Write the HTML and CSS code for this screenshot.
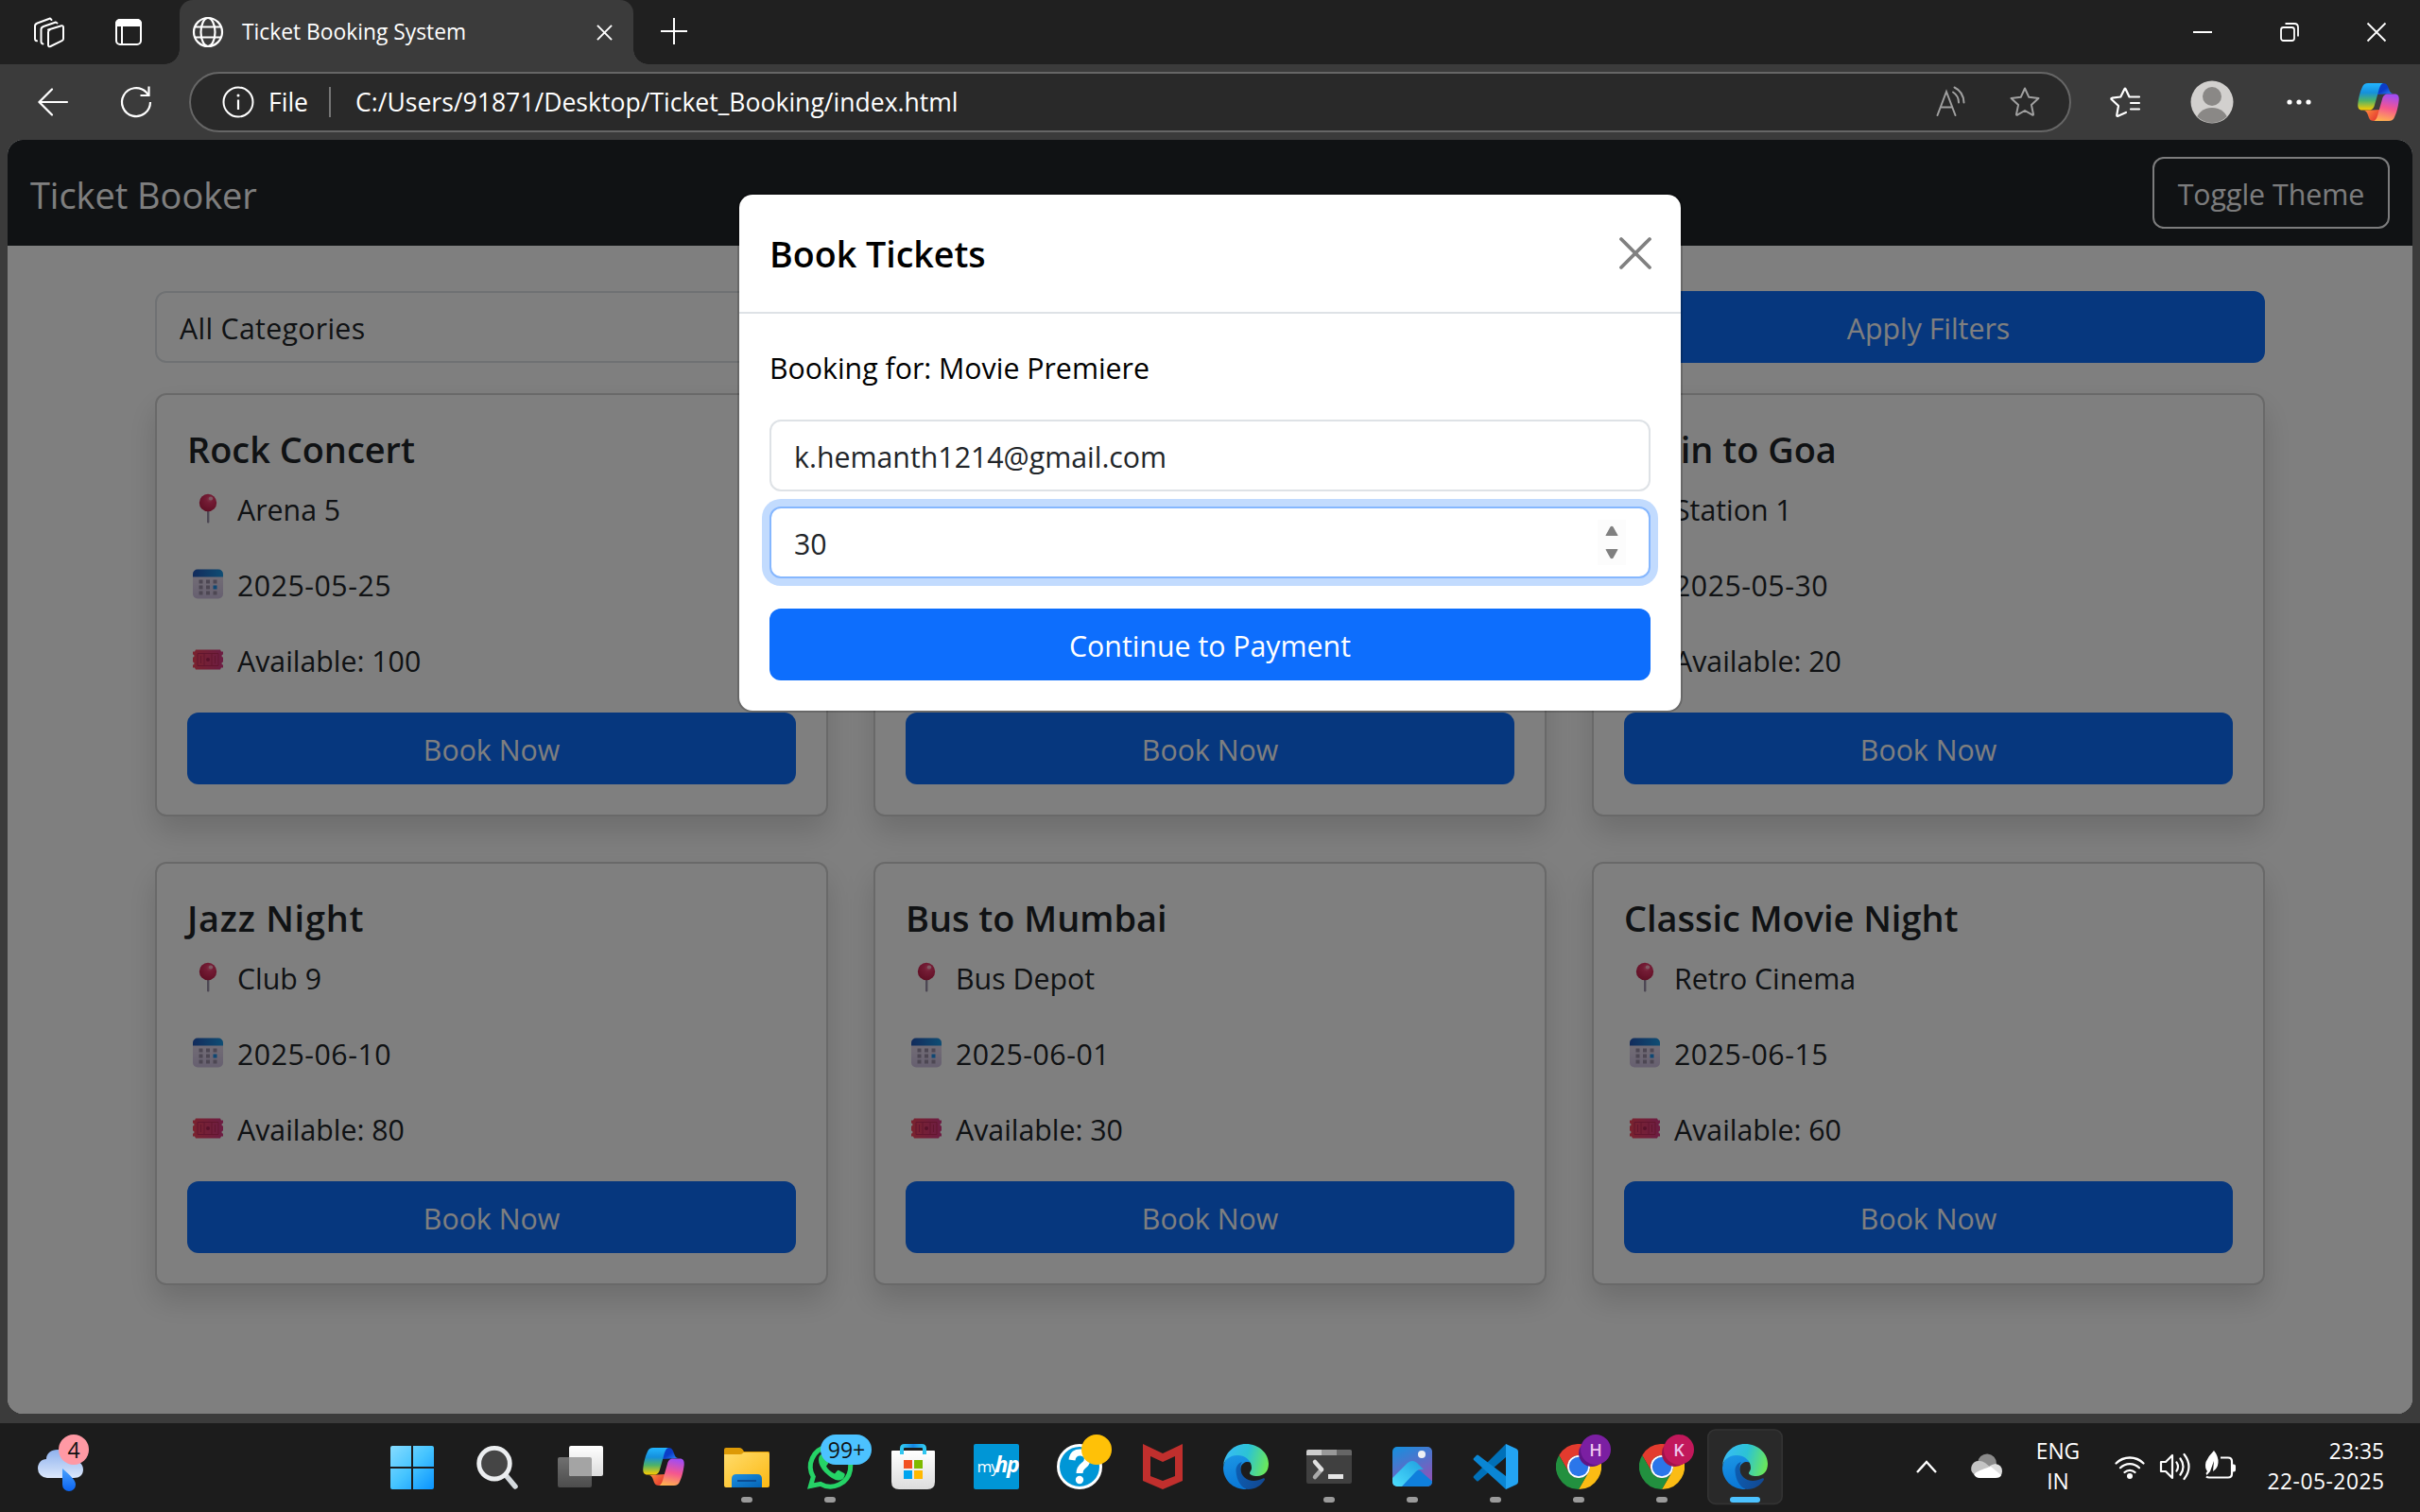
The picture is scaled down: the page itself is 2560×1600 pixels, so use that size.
FILE: index.html
```html
<!DOCTYPE html>
<html lang="en">
<head>
<meta charset="utf-8">
<title>Ticket Booking System</title>
<link rel="stylesheet" href="styles.css">
</head>
<body>
<svg class="defs" aria-hidden="true">
  <defs>
    <linearGradient id="cpA" x1="0" y1="0" x2="0" y2="1"><stop offset="0" stop-color="#22b5ff"/><stop offset=".35" stop-color="#1590dc"/><stop offset=".65" stop-color="#4eb268"/><stop offset="1" stop-color="#ffcc00"/></linearGradient>
    <linearGradient id="cpB" x1="0" y1="0" x2="1" y2="1"><stop offset="0" stop-color="#0a3fc6"/><stop offset=".5" stop-color="#0b3cc8"/><stop offset="1" stop-color="#2f90ff"/></linearGradient>
    <linearGradient id="cpC" x1=".5" y1="0" x2=".3" y2="1"><stop offset="0" stop-color="#a24cf2"/><stop offset=".5" stop-color="#f5568f"/><stop offset="1" stop-color="#ffb24e"/></linearGradient>
    <linearGradient id="cpD" x1="0" y1="0" x2="1" y2=".6"><stop offset="0" stop-color="#ff9340"/><stop offset="1" stop-color="#e5382f"/></linearGradient>
    <linearGradient id="edA" x1="0" y1=".4" x2="1" y2=".6"><stop offset="0" stop-color="#37bbf6"/><stop offset=".5" stop-color="#2cc3d4"/><stop offset="1" stop-color="#6ce957"/></linearGradient>
    <linearGradient id="edB" x1="0" y1="0" x2=".2" y2="1"><stop offset="0" stop-color="#1c97e6"/><stop offset="1" stop-color="#0a78d6"/></linearGradient>
    <linearGradient id="edC" x1="0" y1="0" x2="1" y2=".3"><stop offset="0" stop-color="#0c5fb4"/><stop offset="1" stop-color="#124a94"/></linearGradient>
    <linearGradient id="win" gradientUnits="userSpaceOnUse" x1="15" y1="18" x2="61" y2="64"><stop offset="0" stop-color="#86dcff"/><stop offset=".5" stop-color="#45c4ff"/><stop offset="1" stop-color="#0a94ff"/></linearGradient>
    <linearGradient id="fold" x1="0" y1="0" x2="1" y2="1"><stop offset="0" stop-color="#ffdc6b"/><stop offset="1" stop-color="#fcb914"/></linearGradient>
    <linearGradient id="foldB" x1="0" y1="0" x2="1" y2="1"><stop offset="0" stop-color="#1b8fe0"/><stop offset="1" stop-color="#0563b4"/></linearGradient>
    <linearGradient id="white" x1="0" y1="0" x2="0" y2="1"><stop offset="0" stop-color="#fff"/><stop offset="1" stop-color="#dcdcdc"/></linearGradient>
    <linearGradient id="grey" x1="0" y1="0" x2="0" y2="1"><stop offset="0" stop-color="#707070"/><stop offset="1" stop-color="#4c4c4c"/></linearGradient>
    <linearGradient id="handle" x1="0" y1="0" x2="1" y2="0"><stop offset="0" stop-color="#30c8f0"/><stop offset=".5" stop-color="#1587e6"/><stop offset="1" stop-color="#30c8f0"/></linearGradient>
    <linearGradient id="photo" x1="0" y1="0" x2=".5" y2="1"><stop offset="0" stop-color="#1291e0"/><stop offset="1" stop-color="#8a56b8"/></linearGradient>
    <linearGradient id="mount" x1="0" y1="1" x2="1" y2="0"><stop offset="0" stop-color="#4fe3ff"/><stop offset="1" stop-color="#1f9fe0"/></linearGradient>
    <linearGradient id="cloud" x1="0" y1="0" x2="0" y2="1"><stop offset="0" stop-color="#8fb2ee"/><stop offset="1" stop-color="#dbe7fb"/></linearGradient>
    <linearGradient id="drop" x1="0" y1="0" x2="0" y2="1"><stop offset="0" stop-color="#4aa3ff"/><stop offset="1" stop-color="#0a63f0"/></linearGradient>
    <linearGradient id="calTop" x1="0" y1="0" x2="1" y2="0"><stop offset="0" stop-color="#2457b8"/><stop offset="1" stop-color="#1e9be8"/></linearGradient>
    <linearGradient id="calBody" x1="0" y1="0" x2="0" y2="1"><stop offset="0" stop-color="#ece2f0"/><stop offset="1" stop-color="#cdbfe0"/></linearGradient>
    <linearGradient id="tick" x1="0" y1="0" x2="1" y2="0"><stop offset="0" stop-color="#f5455c"/><stop offset="1" stop-color="#d93a86"/></linearGradient>
    <radialGradient id="pinHead" cx=".6" cy=".3" r=".7"><stop offset="0" stop-color="#ff6a90"/><stop offset=".3" stop-color="#e8386a"/><stop offset="1" stop-color="#c21f4a"/></radialGradient>
  </defs>
  <symbol id="copilot" viewBox="0 0 44 40">
    <path fill="url(#cpB)" d="M20 12C22 4 24 0 27 0c4 0 5 3 6 6s2 5 5 5z"/>
    <path fill="url(#cpD)" d="M24 28C22 36 20 40 17 40c-4 0-5-3-6-6s-2-5-5-5z"/>
    <path fill="url(#cpA)" d="M11 0H27C24 1 23 5 22 9l-4 14c-1 4-3 5.500-6 5.500H5C1 28.500 0 26 .3 22 1 15 3 8 5 4 6 1.500 8 0 11 0z"/>
    <path fill="url(#cpC)" d="M33 40H17c3-1 4-5 5-9l4-14c1-4 3-5.500 6-5.500h7c4 0 5 2.500 4.700 6.500-.7 7-2.700 14-4.700 18-1 2.500-3 4-6 4z"/>
  </symbol>
  <symbol id="edge" viewBox="0 0 48 48">
    <path fill="url(#edB)" d="M0 25C1 16 8 11 15 11c8 0 13 4 14.500 9C26 18 20 19 18.500 25 17 32 22 40 31 40L24 48C10 48 0 38 0 25z"/>
    <path fill="url(#edC)" d="M13.500 29c-.5-5 2.500-9 6.500-10-3 4-2 12 2 16 5 5 13 5 20 1.600 1.500-.8 2.500.2 1.700 1.600C40 44 34 48 26 48c-7-1-12-10-12.500-19z"/>
    <path fill="url(#edA)" d="M.2 23C1 10 11 0 24 0c14 0 24 10 24 21 0 8-5 13-12 13-5 0-8-1.500-8-3s2-2.500 2-6c0-7-6-13-15-13C6 12 1 18 .2 23z"/>
  </symbol>
  <symbol id="chrome" viewBox="0 0 48 48">
    <path fill="#e33b2e" d="M3.200 12A24 24 0 0 1 44.800 12H24A12 12 0 0 0 13.600 30z"/>
    <path fill="#fbbc14" d="M44.800 12A24 24 0 0 1 24 48L34.400 30A12 12 0 0 0 24 12z"/>
    <path fill="#22903f" d="M24 48A24 24 0 0 1 3.200 12L13.600 30A12 12 0 0 0 34.400 30z"/>
    <circle cx="24" cy="24" r="12" fill="#fff"/><circle cx="24" cy="24" r="10.200" fill="#2b76ea"/>
  </symbol>
  <symbol id="pin" viewBox="0 0 32 32">
    <rect x="15" y="16" width="2.400" height="15.500" rx="1" fill="#9a90a8"/><circle cx="16" cy="10" r="9.200" fill="url(#pinHead)"/><ellipse cx="19" cy="5.500" rx="2.200" ry="2" fill="#ffb0c4"/>
  </symbol>
  <symbol id="calendar" viewBox="0 0 32 32">
    <rect x="0" y=".5" width="32" height="31" rx="5" fill="url(#calBody)"/><path fill="url(#calTop)" d="M0 8.500V5.500a5 5 0 0 1 5-5h22a5 5 0 0 1 5 5v3z"/>
    <path fill="#9a8fa6" d="M6.500 11.500h4v4h-4zM14 11.500h4v4h-4zM21.500 11.500h4v4h-4zM6.500 17.500h4v4h-4zM14 17.500h4v4h-4zM6.500 23.500h4v4h-4zM14 23.500h4v4h-4zM21.500 23.500h4v4h-4z"/><path fill="#1e8fe6" d="M21.500 17.500h4v4h-4z"/>
  </symbol>
  <symbol id="ticket" viewBox="0 0 32 32">
    <path fill="url(#tick)" d="M3 5.500h26l1 2h2v3a1.500 1.500 0 0 0 0 3v5a1.500 1.500 0 0 0 0 3v3h-2l-1 2H3l-1-2H0v-3a1.500 1.500 0 0 0 0-3v-5a1.500 1.500 0 0 0 0-3v-3h2z"/>
    <path fill="none" stroke="#c42c5c" stroke-width="1" d="M5 9.500h22v13H5zM12 9.500v13M20 9.500v13M8.500 12v8M23.500 12v8"/><circle cx="16" cy="16" r="2" fill="#b02454"/>
  </symbol>
</svg>

<header class="tabstrip">
  <svg class="ic workspaces" viewBox="0 0 34 34" fill="none" stroke="#fff" stroke-width="2" stroke-linejoin="round" stroke-linecap="round"><path d="M16 14.500 30 10.300q2-.5 2 1.500V24q0 1.500-1.500 2.200L18.500 32q-2.500 1-2.500-1.500V17q0-2 2-2.800"/><path d="M24 6.500 11 11q-2.500 1-2.500 3v13q0 2 2 2.500M18 2.500 4.500 7.500Q2 8.500 2 10.500V24q0 2 2 2.300M24 6.500l1.500 1M18 2.500l1.500 1.500"/></svg>
  <svg class="ic vertical" viewBox="0 0 30 30"><rect x="2" y="2" width="26" height="26" rx="4" fill="none" stroke="#fff" stroke-width="2"/><path fill="#fff" d="M1 9V6a5 5 0 0 1 5-5h18a5 5 0 0 1 5 5v3z"/><path stroke="#fff" stroke-width="2" d="M8 9v19"/></svg>
  <div class="tab">
    <svg class="globe" viewBox="0 0 32 32" fill="none" stroke="#fff" stroke-width="2.200"><circle cx="16" cy="16" r="15"/><ellipse cx="16" cy="16" rx="7.500" ry="15"/><path d="M2 10.500h28M2 21.500h28"/></svg>
    <span class="tab-title">Ticket Booking System</span>
    <svg class="tab-x" viewBox="0 0 18 18" stroke="#fff" stroke-width="2"><path d="M1 1l16 16M17 1 1 17"/></svg>
  </div>
  <svg class="ic plus" viewBox="0 0 28 28" stroke="#fff" stroke-width="2"><path d="M14 0v28M0 14h28"/></svg>
  <div class="winctl">
    <svg viewBox="0 0 20 20" stroke="#fff" stroke-width="2"><path d="M0 10h20"/></svg>
    <svg viewBox="0 0 20 20" fill="none" stroke="#fff" stroke-width="1.800"><rect x="1" y="5" width="14" height="14" rx="2.500"/><path d="M5.500 1H15q4 0 4 4v9.500"/></svg>
    <svg viewBox="0 0 20 20" stroke="#fff" stroke-width="1.800"><path d="M.5.500l19 19M19.500.500l-19 19"/></svg>
  </div>
</header>

<div class="toolbar">
  <svg class="ic back" viewBox="0 0 32 32" fill="none" stroke="#fff" stroke-width="2.200" stroke-linecap="round"><path d="M31 16H1.500M15 2.500 1.500 16 15 29.500"/></svg>
  <svg class="ic reload" viewBox="0 0 34 34" fill="none" stroke="#fff" stroke-width="2.200"><path d="M32 17a15 15 0 1 1-4.500-10.600L30 9.500"/><path d="M30.500.500v9.500h-9"/></svg>
  <div class="address">
    <svg class="info" viewBox="0 0 34 34" fill="none" stroke="#fff" stroke-width="2"><circle cx="17" cy="17" r="15.500"/><path stroke-width="2.200" d="M17 14.500V25"/><circle cx="17" cy="10" r="1.500" fill="#fff" stroke="none"/></svg>
    <span class="scheme">File</span><i class="sep"></i><span class="url">C:/Users/91871/Desktop/Ticket_Booking/index.html</span>
    <svg class="read" viewBox="0 0 32 34" fill="none" stroke="#a0a0a0" stroke-width="2" stroke-linecap="round"><path d="M1.500 31 11 6l9.500 25M5 22.500h12M18 6.500q6 4 6 11M19.500 1.500Q29 6 29.500 17.500"/></svg>
    <svg class="star" viewBox="0 0 32 32" fill="none" stroke="#a0a0a0" stroke-width="2" stroke-linejoin="round"><path d="M16 1.500l4.300 9.300 10.200 1.200-7.600 6.900 2.100 10.100q0 1-1 .7L16 25l-8 4.700q-1 .3-1-.7L9.100 18.900 1.500 12l10.200-1.200z"/></svg>
  </div>
  <svg class="ic favs" viewBox="0 0 32 32" fill="none" stroke="#fff" stroke-width="2.200" stroke-linejoin="round" stroke-linecap="round"><path d="M17 27l-9 4q-1 0-.7-1.500L9 20 1.500 13q-.5-1 .8-1.300l9-1.200L15.500 2q.5-.8 1 0l4 8.500H31M22 17h9M22 23.500h9"/></svg>
  <svg class="ic avatar" viewBox="0 0 46 46"><clipPath id="av"><circle cx="23" cy="23" r="22"/></clipPath><circle cx="23" cy="23" r="22.500" fill="#d2d0ce"/><g clip-path="url(#av)" fill="#8a8886"><circle cx="23" cy="17" r="10"/><ellipse cx="23" cy="43" rx="16.500" ry="14"/></g></svg>
  <svg class="ic dots" viewBox="0 0 28 8" fill="#fff"><circle cx="4" cy="4" r="2.600"/><circle cx="14" cy="4" r="2.600"/><circle cx="24" cy="4" r="2.600"/></svg>
  <svg class="ic cop"><use href="#copilot"/></svg>
</div>

<main class="viewport">
  <nav class="navbar"><span class="brand">Ticket Booker</span><button class="btn outline">Toggle Theme</button></nav>
  <div class="container">
    <div class="row filters">
      <div class="control select">All Categories</div>
      <div class="control"></div>
      <button class="btn primary">Apply Filters</button>
    </div>
    <div class="row cards">
      <article class="card"><h5>Rock Concert</h5><p><svg><use href="#pin"/></svg><span>Arena 5</span></p><p><svg><use href="#calendar"/></svg><time>2025-05-25</time></p><p><svg><use href="#ticket"/></svg><span>Available: 100</span></p><button class="btn primary">Book Now</button></article>
      <article class="card"><h5></h5><p></p><p></p><p></p><button class="btn primary">Book Now</button></article>
      <article class="card"><h5>Train to Goa</h5><p><svg><use href="#pin"/></svg><span>Station 1</span></p><p><svg><use href="#calendar"/></svg><time>2025-05-30</time></p><p><svg><use href="#ticket"/></svg><span>Available: 20</span></p><button class="btn primary">Book Now</button></article>
      <article class="card"><h5 class="wide">Jazz Night</h5><p><svg><use href="#pin"/></svg><span>Club 9</span></p><p><svg><use href="#calendar"/></svg><time>2025-06-10</time></p><p><svg><use href="#ticket"/></svg><span>Available: 80</span></p><button class="btn primary">Book Now</button></article>
      <article class="card"><h5>Bus to Mumbai</h5><p><svg><use href="#pin"/></svg><span>Bus Depot</span></p><p><svg><use href="#calendar"/></svg><time>2025-06-01</time></p><p><svg><use href="#ticket"/></svg><span>Available: 30</span></p><button class="btn primary">Book Now</button></article>
      <article class="card"><h5>Classic Movie Night</h5><p><svg><use href="#pin"/></svg><span>Retro Cinema</span></p><p><svg><use href="#calendar"/></svg><time>2025-06-15</time></p><p><svg><use href="#ticket"/></svg><span>Available: 60</span></p><button class="btn primary">Book Now</button></article>
    </div>
  </div>
  <div class="backdrop">
    <section class="modal">
      <div class="modal-head"><h5>Book Tickets</h5><svg class="close" viewBox="0 0 34 34" stroke="#808080" stroke-width="3.800" stroke-linecap="round"><path d="M2 2l30 30M32 2 2 32"/></svg></div>
      <div class="modal-body">
        <p>Booking for: Movie Premiere</p>
        <div class="control">k.hemanth1214@gmail.com</div>
        <div class="control focus"><span>30</span><svg class="spin" viewBox="0 0 30 48" fill="#808080"><path fill="#fcfcfc" d="M0 0h30v48H0z"/><path d="M13.500 7.500q1.500-1.500 3 0l5 9q0 .5-1 .5h-11q-1 0-1-.5zM13.500 40.500q1.500 1.500 3 0l5-9q0-.5-1-.5h-11q-1 0-1 .5z"/></svg></div>
        <button class="btn primary">Continue to Payment</button>
      </div>
    </section>
  </div>
</main>

<footer class="taskbar">
  <svg class="weather" viewBox="0 0 80 80"><path fill="url(#cloud)" d="M26 52a10 10 0 0 1-10-10c0-6 4-10 9-10 0-6 5-10 12-10s12 5 12 11c8-1 15 3 15 10 0 6-4 9-10 9z"/><path fill="url(#drop)" d="M42 42c7 6 14 12 14 17a7 7 0 0 1-14 0z"/><circle cx="54" cy="22" r="16" fill="#ff99a4"/><text x="54" y="30.500" class="badge-t">4</text></svg>
  <div class="apps">
    <svg viewBox="0 0 80 80" fill="url(#win)"><path d="M17 18h20v22H15V20q0-2 2-2zM39 18h20q2 0 2 2v20H39zM15 42h22v22H17q-2 0-2-2zM39 42h22v20q0 2-2 2H39z"/></svg>
    <svg viewBox="0 0 80 80"><path stroke="#d5dade" stroke-width="5.500" stroke-linecap="round" d="M49 49l10 12"/><circle cx="37" cy="36.700" r="16.300" fill="#454545" stroke="#eceef0" stroke-width="4.800"/></svg>
    <svg viewBox="0 0 80 80"><rect x="16" y="30" width="36" height="32" rx="2" fill="url(#grey)"/><rect x="28" y="18" width="36" height="32" rx="2" fill="url(#white)"/><path fill="#a4a4a4" d="M28 30h22q2 0 2 2v18H30q-2 0-2-2z"/></svg>
    <svg viewBox="0 0 80 80"><use href="#copilot" x="18" y="20" width="44" height="40"/></svg>
    <svg viewBox="0 0 80 80"><path fill="#dd9a06" d="M16 22q0-2 2-2h14q3 0 5 4h26q1 0 1 2v8H16z"/><path fill="url(#fold)" d="M16 27h17q2 0 3.500-2H62q2 0 2 2v33q0 2-2 2H18q-2 0-2-2z"/><path fill="url(#foldB)" d="M24 62V53q0-5 5-5h22q5 0 5 5v9z"/><path stroke="#0a4d94" stroke-width="2" d="M30 55h20"/><rect class="dot" x="34" y="72" width="12" height="6" rx="3"/></svg>
    <svg viewBox="0 0 80 80"><path fill="none" stroke="#25d366" stroke-width="5" d="M19.500 60.500l2.800-9.800A21.200 21.200 0 1 1 30 58.300z"/><path fill="#25d366" d="M28 33q0-5 3-6h3q1 0 2 2l2.500 6q.3 1-1 2.500l-1.500 2q3 5.500 9 8l2.500-3q1-1 2-.5l5.500 3q1 .5.700 2-1 5-6.500 5.500Q44 55 34.500 46 28 39 28 33z"/><rect x="30" y="6" width="54" height="32" rx="16" fill="#4cc2ff"/><text x="57.500" y="30.500" class="badge-t">99+</text><rect class="dot" x="34" y="72" width="12" height="6" rx="3"/></svg>
    <svg viewBox="0 0 80 80"><path fill="url(#white)" d="M17 24q0-1 1-1h44q1 0 1 1v32q0 8-8 8H25q-8 0-8-8z"/><path fill="none" stroke="url(#handle)" stroke-width="4" d="M28 27v-6q0-3 3-3h18q3 0 3 3v6"/><path fill="#f25022" d="M30 33h9v9h-9z"/><path fill="#7fba00" d="M41 33h9v9h-9z"/><path fill="#00a4ef" d="M30 44h9v9h-9z"/><path fill="#ffb900" d="M41 44h9v9h-9z"/></svg>
    <svg viewBox="0 0 80 80"><rect x="16" y="16" width="48" height="48" rx="2" fill="#0096d6"/><text x="19.500" y="46" class="my">my</text><text x="38.500" y="46" class="hp">hp</text></svg>
    <svg viewBox="0 0 80 80"><circle cx="40" cy="40" r="22.500" fill="#0096d6" stroke="#fff" stroke-width="3"/><path fill="none" stroke="#fff" stroke-width="7" d="M32 33q1-9 10-8 8 2 6 9-1 3-4 5-4 3-4 8"/><circle cx="40" cy="54" r="4.200" fill="#fff"/><circle cx="58" cy="22" r="16" fill="#ffc107"/></svg>
    <svg viewBox="0 0 80 80"><path fill="#c02f2d" fill-rule="evenodd" d="M19 16l21 10 21-10v39L40 64 19 55zM27 29v21l13 5 13-5V29l-13 6z"/></svg>
    <svg viewBox="0 0 80 80"><use href="#edge" x="16" y="16" width="48" height="48"/></svg>
    <svg viewBox="0 0 80 80"><rect x="16" y="22" width="48" height="36" rx="2" fill="#404040"/><path fill="#ccc" d="M18 22h14v6H16v-4q0-2 2-2z"/><path fill="#999" d="M32 22h16v6H32z"/><path fill="#666" d="M48 22h14q2 0 2 2v4H48z"/><path stroke="#aaa" stroke-width="4.500" stroke-linecap="round" d="M32 43l-7 8"/><path stroke="#e0e0e0" stroke-width="4.500" stroke-linecap="round" d="M25 35l7 8"/><rect x="39" y="48" width="16" height="5" fill="#e6e6e6"/><rect class="dot" x="34" y="72" width="12" height="6" rx="3"/></svg>
    <svg viewBox="0 0 80 80"><clipPath id="ph"><rect x="19" y="19" width="42" height="42" rx="5"/></clipPath><g clip-path="url(#ph)"><path fill="url(#photo)" d="M19 19h42v42H19z"/><path fill="#0f7fdc" d="M28 62l15-17q2-2 5-1l16 14v6z"/><path fill="url(#mount)" d="M16 55l19-19q5-4 10 0l7 7q-5-1-8 2L28 62H19z"/></g><circle cx="50" cy="27" r="4" fill="#eef0f4"/><rect class="dot" x="34" y="72" width="12" height="6" rx="3"/></svg>
    <svg viewBox="0 0 80 80"><path fill="#0070b8" d="M51 16v14L22 55q-1 1-2 0l-3-3q-1-1 0-2z"/><path fill="#0a86d4" d="M51 64V50L22 28q-1-1-2 0l-3 3q-1 1 0 2z"/><path fill="#23a4f2" d="M51 16l11 5q2 1 2 3v32q0 2-2 3l-11 5z"/><rect class="dot" x="34" y="72" width="12" height="6" rx="3"/></svg>
    <svg viewBox="0 0 80 80"><use href="#chrome" x="16" y="16" width="48" height="48"/><circle cx="54" cy="26" r="14" fill="#5f1585"/><circle cx="58" cy="22" r="16" fill="#7b1fa2"/><text x="58" y="28.500" class="prof">H</text><rect class="dot" x="34" y="72" width="12" height="6" rx="3"/></svg>
    <svg viewBox="0 0 80 80"><use href="#chrome" x="16" y="16" width="48" height="48"/><circle cx="54" cy="26" r="14" fill="#a0134a"/><circle cx="58" cy="22" r="16" fill="#c2185b"/><text x="58" y="28.500" class="prof">K</text><rect class="dot" x="34" y="72" width="12" height="6" rx="3"/></svg>
    <svg viewBox="0 0 80 80"><rect x=".8" y="1" width="78.400" height="78.400" rx="8" fill="#292929" stroke="#333" stroke-width="1.600"/><use href="#edge" x="16" y="16" width="48" height="48"/><rect x="24" y="72" width="32" height="6" rx="3" fill="#4cc2ff"/></svg>
  </div>
  <div class="tray">
    <svg class="chev" viewBox="0 0 22 14" fill="none" stroke="#fff" stroke-width="2.400"><path d="M1 13 11 2l10 11"/></svg>
    <svg class="cloud" viewBox="0 0 32 24"><path fill="#8b8b8b" d="M6 8a10 10 0 0 1 20 1L16 14z"/><path fill="#c4c4c4" d="M2 20a8 8 0 0 1 6-14q3 0 6 2l6 5z"/><path fill="#dedede" d="M16 14q3-4 9-5 7 1 7 8 0 3-2 5z"/><path fill="#fff" d="M2 20q4-4 18-8l11 9q-1 3-6 3H8q-4 0-6-4z"/></svg>
    <div class="lang">ENG<br>IN</div>
    <svg class="wifi" viewBox="0 0 32 28" fill="none" stroke="#fff" stroke-width="2.300" stroke-linecap="round"><path d="M1.500 10.500a20.500 20.500 0 0 1 29 0M6 15.300a14 14 0 0 1 20 0M10.500 20a8 8 0 0 1 11 0"/><circle cx="16" cy="24" r="3" fill="#fff" stroke="none"/></svg>
    <svg class="vol" viewBox="0 0 34 32" fill="none" stroke="#fff" stroke-width="2.200" stroke-linejoin="round" stroke-linecap="round"><path d="M2 11h5l7-7v24l-7-7H2zM18.500 11.500q3 4.500 0 9M22.500 7.500q6 8.500 0 17M26.500 3q10 13 0 26"/></svg>
    <svg class="bat" viewBox="0 0 32 30"><path fill="none" stroke="#fff" stroke-width="2.200" d="M16 7.500h8q4 0 4 4v13q0 4-4 4H4q-2 0-3-1"/><path fill="#fff" d="M28 14.500h2q2 0 2 2v4q0 2-2 2h-2zM9 0q5 6 4.500 13-.5 6-5.500 9l1-11-4 11-3.500 4-1-2 1.500-2Q-1 18 .5 12 3 6 9 0z"/></svg>
    <div class="clock">23:35<br><time>22-05-2025</time></div>
  </div>
</footer>
</body>
</html>
```
FILE: styles.css
```css
* { box-sizing: border-box; }
body { margin: 0; width: 2560px; height: 1600px; overflow: hidden; background: #3b3b3b; color: #fff; font-family: "Open Sans", "Noto Sans", sans-serif; display: flex; flex-direction: column; }
svg { display: block; flex: none; overflow: visible; }
h5, p { margin: 0; }
.defs { position: absolute; width: 0; height: 0; }

.tabstrip { height: 68px; flex: none; background: #202020; display: flex; align-items: center; }
.workspaces { width: 34px; height: 34px; margin-left: 35px; }
.vertical { width: 30px; height: 30px; margin-left: 52px; }
.tab { position: relative; width: 480px; height: 68px; margin-left: 39px; padding: 0 22px 0 14px; background: #3b3b3b; border-radius: 14px 14px 0 0; display: flex; align-items: center; }
.tab::before, .tab::after { content: ""; position: absolute; bottom: 0; width: 16px; height: 16px; }
.tab::before { left: -16px; background: radial-gradient(circle at 0 0, #202020 15.5px, #3b3b3b 16px); }
.tab::after { right: -16px; background: radial-gradient(circle at 100% 0, #202020 15.5px, #3b3b3b 16px); }
.globe { width: 32px; height: 32px; }
.tab-title { margin-left: 20px; font-size: 22.8px; flex: 1; white-space: nowrap; padding-bottom: 1px; }
.tab-x { width: 17px; height: 17px; margin-top: 1px; }
.plus { width: 28px; height: 28px; margin-left: 29px; margin-bottom: 2px; }
.winctl { margin-left: auto; margin-right: 36px; display: flex; gap: 72px; }
.winctl svg { width: 20px; height: 20px; }

.toolbar { height: 80px; flex: none; display: flex; align-items: center; }
.back { width: 32px; height: 32px; margin-left: 40px; }
.reload { width: 34px; height: 34px; margin-left: 55px; }
.address { width: 1991px; height: 64px; margin-left: 39px; padding: 0 31px 0 33px; border: 2px solid #666; border-radius: 32px; background: #292929; display: flex; align-items: center; font-size: 26.55px; white-space: nowrap; }
.info { width: 34px; height: 34px; }
.scheme { width: 64px; margin-left: 15px; }
.sep { width: 2px; height: 32px; background: #757575; }
.url { margin-left: 26px; flex: 1; }
.read { width: 32px; height: 34px; }
.star { width: 32px; height: 32px; margin-left: 46px; }
.favs { width: 32px; height: 32px; margin-left: 41px; }
.avatar { width: 46px; height: 46px; margin-left: 53px; }
.dots { width: 28px; height: 8px; margin-left: 55px; }
.cop { width: 44px; height: 40px; margin-left: 48px; }

.viewport { position: relative; flex: none; width: 2544px; height: 1348px; margin: 0 8px; background: #fff; border-radius: 16px; overflow: hidden; color: #212529; font-size: 30.3px; line-height: 48px; }
.navbar { height: 112px; padding: 0 24px; background: #212529; color: #fff; display: flex; align-items: center; justify-content: space-between; }
.brand { font-size: 37.9px; padding-top: 3px; }
.btn { display: block; height: 76px; padding: 3px 22px 0; border: 2px solid transparent; border-radius: 12px; font: inherit; color: #fff; white-space: nowrap; }
.outline { background: none; border-color: #f8f9fa; color: #f8f9fa; width: 251px; }
.primary { background: #0d6efd; width: 100%; }
.container { width: 2232px; margin: 48px auto 0; }
.row { display: grid; grid-template-columns: repeat(3, 1fr); column-gap: 48px; }
.cards { margin-top: 32px; row-gap: 48px; }
.control { height: 76px; padding: 13.5px 24px 0; border: 2px solid #dee2e6; border-radius: 12px; background: #fff; }
.select { letter-spacing: .3px; }
.card { height: 448px; padding: 32px; border: 2px solid rgba(0,0,0,.175); border-radius: 12px; background: #fff; box-shadow: 0 16px 32px rgba(0,0,0,.15); }
.card h5 { height: 48px; padding-top: 1px; font-size: 37.9px; line-height: 48px; font-weight: 600; margin-bottom: 16px; }
.card h5.wide { letter-spacing: .75px; }
.card p { height: 48px; margin-bottom: 32px; padding-left: 6px; display: flex; align-items: center; gap: 15px; }
.card p svg { width: 32px; height: 32px; }
.card p span, .card p time { padding-top: 3px; }
.card p time { letter-spacing: .5px; }

.backdrop { position: absolute; inset: 0; background: rgba(0,0,0,.5); display: flex; justify-content: center; align-items: flex-start; padding-top: 56px; }
.modal { width: 1000px; border: 2px solid rgba(0,0,0,.175); background: #fff; background-clip: padding-box; border-radius: 16px; color: #000; }
.modal-head { height: 126px; padding: 0 31px 0 32px; border-bottom: 2px solid #dee2e6; display: flex; align-items: center; justify-content: space-between; }
.modal-head h5 { font-size: 37.6px; line-height: 60px; font-weight: 600; padding-top: 1px; }
.close { width: 34px; height: 34px; }
.modal-body { padding: 32px; }
.modal-body p { height: 48px; padding-top: 1.5px; margin-bottom: 32px; }
.modal-body .control { color: #212529; margin-bottom: 16px; }
.modal-body .focus { margin-bottom: 32px; border-color: #86b7fe; box-shadow: 0 0 0 8px rgba(13,110,253,.25); display: flex; justify-content: space-between; }

.taskbar { height: 94px; margin-top: auto; flex: none; background: #1c1c1c; display: flex; align-items: center; padding-bottom: 2px; }
.taskbar svg { width: 80px; height: 80px; }
.taskbar .weather { margin: 0 294px 0 24px; }
.apps { display: flex; gap: 8px; }
.badge-t { font-size: 23px; fill: #111; text-anchor: middle; }
.prof { font-size: 18px; font-weight: 600; fill: #eec6ee; text-anchor: middle; }
.my { font-size: 17px; fill: #fff; letter-spacing: -1px; }
.hp { font-size: 23px; font-weight: 700; font-style: italic; fill: #fff; letter-spacing: -1.5px; }
.dot { fill: #9a9a9a; }
.tray { margin-left: auto; margin-right: 38px; display: flex; align-items: center; font-size: 22.8px; line-height: 32px; }
.spin { width: 30px; height: 48px; margin-top: -1.5px; }
.taskbar .chev { width: 22px; height: 14px; }
.taskbar .cloud { width: 32px; height: 24px; margin-left: 37px; }
.lang { width: 60px; margin-left: 29px; text-align: center; }
.taskbar .wifi { width: 32px; height: 28px; margin-left: 30px; }
.taskbar .vol { width: 34px; height: 32px; margin-left: 15px; }
.taskbar .bat { width: 32px; height: 30px; margin-left: 15px; margin-bottom: 4px; }
.clock { width: 157px; text-align: right; }
.clock time { letter-spacing: .5px; margin-right: -.5px; }
```
